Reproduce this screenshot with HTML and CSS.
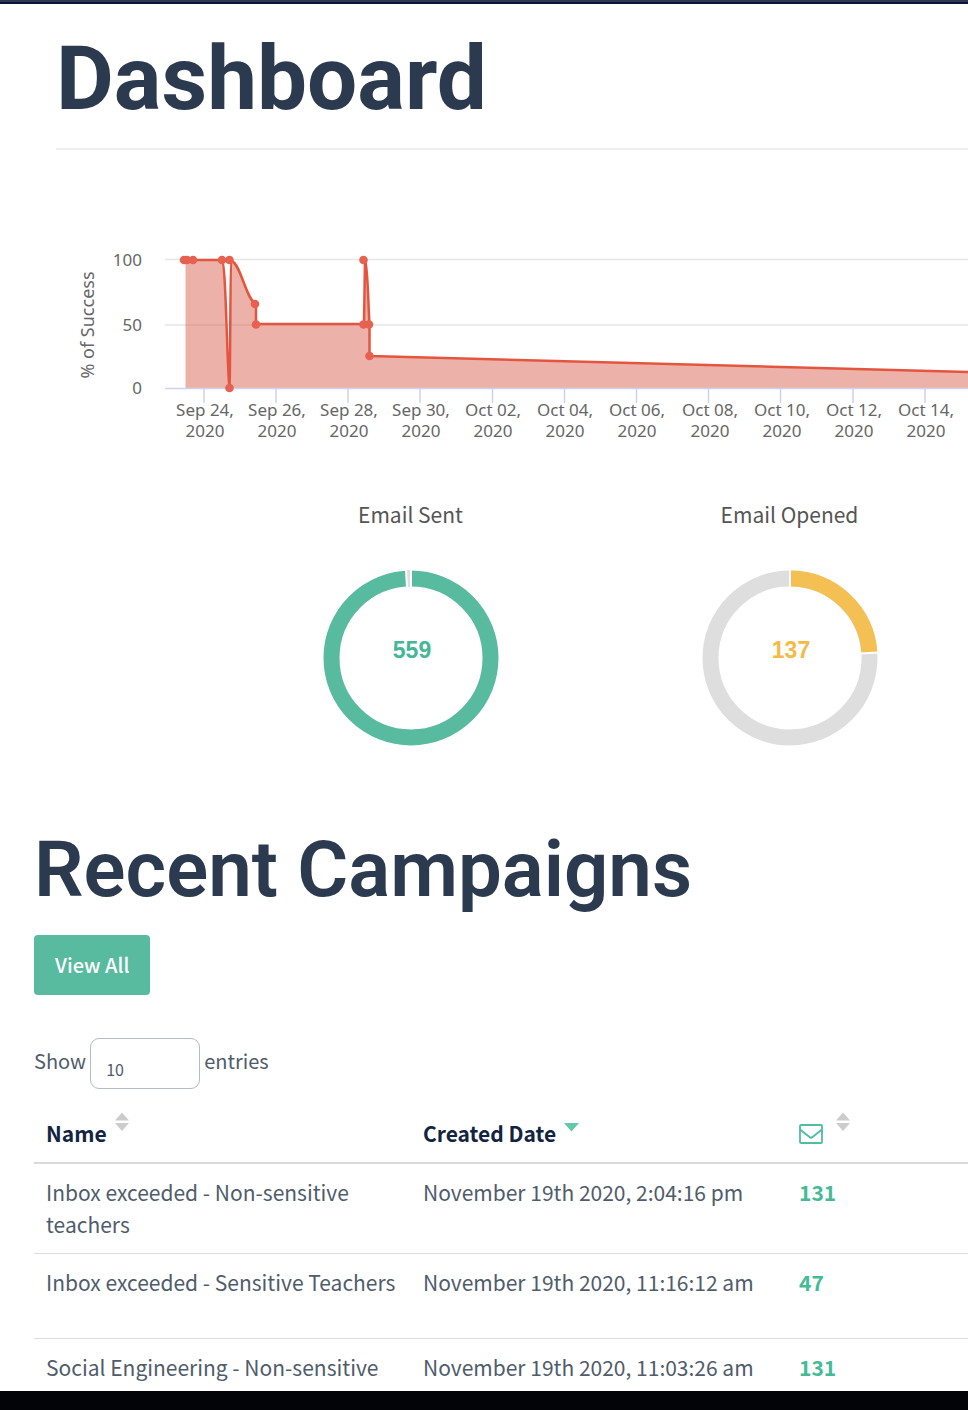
FILE: index.html
```html
<!DOCTYPE html>
<html lang="en">
<head>
<meta charset="utf-8">
<title>Dashboard</title>
<link rel="stylesheet" href="styles.css">
</head>
<body>
<div class="topbar"></div>
<main class="page">
  <header class="page-header"><h1>Dashboard</h1></header>

  <section class="overview">
    <svg class="timeline" viewBox="56 150 912 300" role="img" aria-label="Campaign success over time">
      <g class="grid">
        <path d="M165 259.500H968M165 325H968"/>
      </g>
      <path class="area" d="M185.500 260H222C226 262 227 370 229.500 388C230.500 370 230 262 231.500 261C241 264 246 300 256 304V324H364L365 260C368 270 368 300 369.500 325V356C570 362 770 368 968 372V388H185.500Z"/>
      <path class="axis" d="M165 388.500H968M204 389V403M276 389V403M348 389V403M420 389V403M492.500 389V403M564.500 389V403M636.500 389V403M708.500 389V403M780.500 389V403M853 389V403M925 389V403"/>
      <path class="line" d="M184 260H222C226 262 227 370 229.500 388C230.500 370 230 262 231.500 261C241 264 246 300 256 304V324H364L365 260C368 270 368 300 369.500 325V356C570 362 770 368 968 372"/>
      <g class="points">
        <circle cx="184" cy="260" r="4.300"/><circle cx="187" cy="260" r="4.300"/><circle cx="193" cy="260" r="4.300"/>
        <circle cx="222" cy="260" r="4.300"/><circle cx="229.500" cy="260" r="4.300"/><circle cx="229.500" cy="388" r="4.300"/>
        <circle cx="255" cy="304" r="4.300"/><circle cx="256" cy="324.500" r="4.300"/>
        <circle cx="363.500" cy="260" r="4.300"/><circle cx="363.500" cy="324.500" r="4.300"/><circle cx="369" cy="324.500" r="4.300"/><circle cx="369.500" cy="356" r="4.300"/>
      </g>
      <g class="labels labels-y">
        <text x="142" y="266">100</text><text x="142" y="331">50</text><text x="142" y="394">0</text>
      </g>
      <g class="labels">
        <text class="axis-title" transform="translate(94 325) rotate(-90)">% of Success</text>
        <text x="205" y="416">Sep 24,<tspan x="205" dy="21">2020</tspan></text>
        <text x="277" y="416">Sep 26,<tspan x="277" dy="21">2020</tspan></text>
        <text x="349" y="416">Sep 28,<tspan x="349" dy="21">2020</tspan></text>
        <text x="421" y="416">Sep 30,<tspan x="421" dy="21">2020</tspan></text>
        <text x="493" y="416">Oct 02,<tspan x="493" dy="21">2020</tspan></text>
        <text x="565" y="416">Oct 04,<tspan x="565" dy="21">2020</tspan></text>
        <text x="637" y="416">Oct 06,<tspan x="637" dy="21">2020</tspan></text>
        <text x="710" y="416">Oct 08,<tspan x="710" dy="21">2020</tspan></text>
        <text x="782" y="416">Oct 10,<tspan x="782" dy="21">2020</tspan></text>
        <text x="854" y="416">Oct 12,<tspan x="854" dy="21">2020</tspan></text>
        <text x="926" y="416">Oct 14,<tspan x="926" dy="21">2020</tspan></text>
      </g>
    </svg>
  </section>

  <section class="donuts">
    <figure class="donut">
      <figcaption>Email Sent</figcaption>
      <svg viewBox="0 0 176 176" width="176" height="176" role="img" aria-label="559 emails sent">
        <circle class="ring ring-green" cx="88" cy="88" r="79.500"/>
        <path d="M82 0L83 18H89V0Z" fill="#fff"/>
        <path d="M84 0H87V17H85Z" fill="#dedede"/>
        <text class="count count-green" x="89" y="88">559</text>
      </svg>
    </figure>
    <figure class="donut">
      <figcaption>Email Opened</figcaption>
      <svg viewBox="0 0 176 176" width="176" height="176" role="img" aria-label="137 emails opened">
        <circle class="ring ring-gray" cx="88" cy="88" r="79.500"/>
        <path class="ring ring-gold" d="M88 8.500A79.500 79.500 0 0 1 167.400 83"/>
        <path d="M88 0V18M158 83.500L176 82.500" stroke="#fff" stroke-width="2"/>
        <text class="count count-gold" x="89" y="88">137</text>
      </svg>
    </figure>
  </section>

  <section class="campaigns">
    <h2>Recent Campaigns</h2>
    <button class="view-all" type="button">View All</button>
    <div class="length">
      <label for="page-size">Show</label>
      <select id="page-size"><option>10</option></select>
      <span>entries</span>
    </div>
    <table>
      <colgroup><col class="col-name"><col class="col-date"><col></colgroup>
      <thead>
        <tr>
          <th><div class="head">Name
            <svg class="sort" viewBox="0 0 15 20" width="15" height="20" aria-hidden="true"><path d="M7 .500L14 8.500H0ZM0 11H14L7 19Z"/></svg></div></th>
          <th><div class="head">Created Date
            <svg class="sort sort-active" viewBox="0 0 15 20" width="15" height="20" aria-hidden="true"><path d="M0 6H15L7.500 14.500Z"/></svg></div></th>
          <th><div class="head head-icon">
            <svg class="mail" viewBox="0 0 24 20" width="24" height="20" role="img" aria-label="Emails"><rect x="1" y="1" width="22" height="18" rx="1"/><path d="M1 5.500L10.500 13Q12 14.400 13.500 13L23 5.500"/></svg>
            <svg class="sort" viewBox="0 0 15 20" width="15" height="20" aria-hidden="true"><path d="M7 .500L14 8.500H0ZM0 11H14L7 19Z"/></svg></div></th>
        </tr>
      </thead>
      <tbody>
        <tr><td>Inbox exceeded - Non-sensitive teachers</td><td>November 19th 2020, 2:04:16 pm</td><td class="sent">131</td></tr>
        <tr><td>Inbox exceeded - Sensitive Teachers</td><td>November 19th 2020, 11:16:12 am</td><td class="sent">47</td></tr>
        <tr><td>Social Engineering - Non-sensitive</td><td>November 19th 2020, 11:03:26 am</td><td class="sent">131</td></tr>
      </tbody>
    </table>
  </section>
</main>
<footer class="bottom"></footer>
</body>
</html>
```
FILE: styles.css
```css
* { box-sizing: border-box; }
body {
  margin: 0;
  height: 100vh;
  display: flex;
  flex-direction: column;
  overflow: hidden;
  background: #fff;
  color: #4f5c6b;
  font: 400 21px/32px "Noto Sans CJK SC", "Noto Sans", sans-serif;
}
.topbar { flex: none; height: 4px; background: #2c3950; border-bottom: 2px solid #101238; }
.page { flex: 1; min-height: 0; overflow: hidden; }
.bottom { flex: none; height: 19px; background: #020408; }

h1, h2 { margin: 0; color: #2c3a50; font-family: Roboto, sans-serif; font-weight: 600; }
.page-header { margin-left: 56px; height: 146px; padding-top: 25px; border-bottom: 2px solid #eee; }
h1 { font-size: 89px; line-height: 100px; font-weight: 700; }
h2 { font-size: 78px; line-height: 90px; }

.overview { padding-left: 56px; }
.timeline { display: block; width: 100%; overflow: hidden; }
.grid { stroke: #e6e6e6; stroke-width: 1.5px; }
.area { fill: #d75c48; fill-opacity: 0.47; }
.axis { fill: none; stroke: #ccd3ea; stroke-width: 1.5px; }
.line { fill: none; stroke: #e4553f; stroke-width: 2.5px; stroke-linejoin: round; }
.points { fill: #e66150; }
.labels { fill: #666; font: 400 17px "Noto Sans", sans-serif; text-anchor: middle; }
.labels-y { text-anchor: end; }
.axis-title { font-size: 18px; }

.donuts { display: flex; padding: 48px 0 0 221px; }
.donut { flex: none; width: 379px; margin: 0; display: flex; flex-direction: column; align-items: center; gap: 40px; }
.donut figcaption { color: #555; font-size: 21px; }
.donut svg { display: block; }
.ring { fill: none; stroke-width: 16px; }
.ring-green { stroke: #58ba9e; }
.ring-gray { stroke: #dedede; }
.ring-gold { stroke: #f4c054; }
.count { font: 700 23px "Liberation Sans", sans-serif; text-anchor: middle; }
.count-green { fill: #45b696; }
.count-gold { fill: #f3bb45; }

.campaigns { padding: 79px 0 0 34px; }
.view-all {
  display: block;
  margin-top: 20px;
  padding: 14px 21px;
  border: 0;
  border-radius: 4px;
  background: #58ba9e;
  color: #fff;
  font: 500 20px/32px "Noto Sans CJK SC", sans-serif;
}
.length { display: flex; align-items: flex-start; gap: 4px; margin-top: 43px; font-size: 20px; line-height: 46px; }
.length select {
  width: 110px;
  height: 51px;
  padding: 10px 15px 0;
  border: 1px solid #b4bcc4;
  border-radius: 9px;
  appearance: none;
  background: #fff;
  color: #4f5c6b;
  font: 400 16px "Noto Sans CJK SC", sans-serif;
}
table { width: 100%; margin-top: 20px; table-layout: fixed; border-collapse: separate; border-spacing: 0; }
.col-name { width: 377px; }
.col-date { width: 376px; }
th { height: 55px; padding: 0 12px; border-bottom: 2px solid #dadada; text-align: left; vertical-align: top; color: #12243f; font-weight: 700; }
.head { display: flex; align-items: flex-start; gap: 8px; padding-top: 8px; }
.head-icon { gap: 13px; }
.sort { flex: none; fill: #ccc; margin-top: -5px; }
.sort-active { margin-top: 0; fill: #61c8a8; }
.mail { fill: none; stroke: #50bd9f; stroke-width: 1.8px; margin-top: 7px; }
td { height: 85px; padding: 12px 12px 13px; border-bottom: 1px solid #dedede; vertical-align: top; }
.sent { color: #45ba96; font-weight: 700; }
```
